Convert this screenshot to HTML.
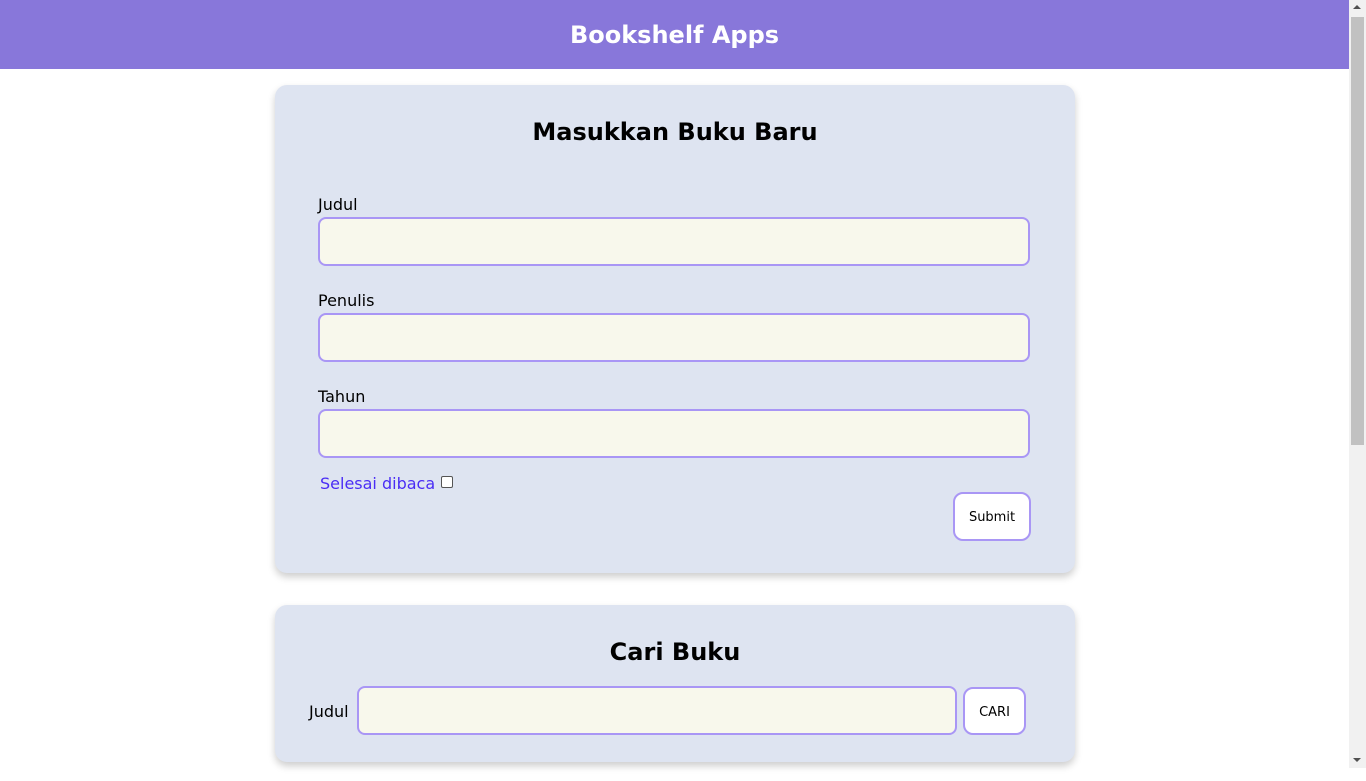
<!DOCTYPE html>
<html><head><style>
*{box-sizing:border-box;margin:0;padding:0}
body{width:1366px;height:781px;overflow:hidden;background:#fff;font-family:"DejaVu Sans",Verdana,sans-serif;position:relative}
.hdr{position:absolute;left:0;top:0;width:1349px;height:69px;background:#8877da;color:#fff;font-weight:bold;font-size:24px;text-align:center;line-height:71px}
.sb{position:absolute;left:1349px;top:0;width:17px;height:768px;background:#f1f1f1}
.thumb{position:absolute;left:1351px;top:17px;width:13px;height:428px;background:#c1c1c1}
.arr{position:absolute;left:1353px;width:0;height:0;border-left:4px solid transparent;border-right:4px solid transparent}
.card{position:absolute;left:275px;width:800px;background:#dee4f1;border-radius:12px;box-shadow:0 4px 8px rgba(0,0,0,.2)}
h2{position:absolute;left:0;width:800px;text-align:center;font-size:24px;font-weight:bold;color:#000}
.lbl{position:absolute;font-size:16px;color:#000}
.inp{position:absolute;background:#f8f8ec;border:2px solid #a996f5;border-radius:8px}
.btn{position:absolute;background:#fff;border:2px solid #a996f5;border-radius:10px;font-size:13px;text-align:center;color:#000}
</style></head><body>
<div class="hdr">Bookshelf Apps</div>
<div class="sb"></div><div class="thumb"></div>
<div class="arr" style="top:5px;border-bottom:4px solid #505050"></div>
<div class="arr" style="top:758px;border-top:4px solid #505050"></div>

<div class="card" style="top:85px;height:488px">
<h2 style="top:33px">Masukkan Buku Baru</h2>
<div class="lbl" style="left:43px;top:110px">Judul</div>
<div class="inp" style="left:43px;top:132px;width:712px;height:49px"></div>
<div class="lbl" style="left:43px;top:206px">Penulis</div>
<div class="inp" style="left:43px;top:228px;width:712px;height:49px"></div>
<div class="lbl" style="left:43px;top:302px">Tahun</div>
<div class="inp" style="left:43px;top:324px;width:712px;height:49px"></div>
<div class="lbl" style="left:45px;top:389px;color:#4a2df5">Selesai dibaca</div>
<div style="position:absolute;left:166px;top:391px;width:12px;height:12px;border:1px solid #555;border-radius:2px;background:#fff"></div>
<div class="btn" style="left:678px;top:407px;width:78px;height:49px;line-height:47px">Submit</div>
</div>

<div class="card" style="top:605px;height:157px">
<h2 style="top:33px">Cari Buku</h2>
<div class="lbl" style="left:34px;top:97px">Judul</div>
<div class="inp" style="left:82px;top:81px;width:600px;height:49px"></div>
<div class="btn" style="left:688px;top:82px;width:63px;height:48px;line-height:47px">CARI</div>
</div>
</body></html>
